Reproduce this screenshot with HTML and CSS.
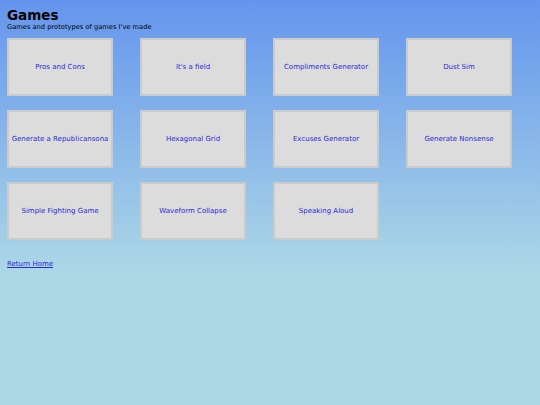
FILE: index.html
```html
<!DOCTYPE html>
<html>
<head>
<meta charset="utf-8">
<title>Games</title>
<link rel="stylesheet" href="styles.css">
</head>
<body>
<div class="page">
  <h1 class="title">Games</h1>
  <p class="subtitle">Games and prototypes of games I've made</p>
  <div class="grid">
    <a class="card" href="#">Pros and Cons</a>
    <a class="card" href="#">It's a field</a>
    <a class="card" href="#">Compliments Generator</a>
    <a class="card" href="#">Dust Sim</a>
    <a class="card" href="#">Generate a Republicansona</a>
    <a class="card" href="#">Hexagonal Grid</a>
    <a class="card" href="#">Excuses Generator</a>
    <a class="card" href="#">Generate Nonsense</a>
    <a class="card" href="#">Simple Fighting Game</a>
    <a class="card" href="#">Waveform Collapse</a>
    <a class="card" href="#">Speaking Aloud</a>
  </div>
  <a class="home" href="#">Return Home</a>
</div>
</body>
</html>
```
FILE: styles.css
```css
html {
  background: #add8e6;
}
body {
  margin: 0;
  background: linear-gradient(#6495ed, #add8e6) no-repeat;
  font-family: "DejaVu Sans", Verdana, sans-serif;
}
.page {
  padding: 7px 7px 8px 7px;
  display: flex;
  flex-direction: column;
  align-items: flex-start;
}
.title {
  margin: 0;
  font-size: 13.5px;
  line-height: 16px;
  font-weight: bold;
  color: #000;
}
.subtitle {
  margin: 0;
  font-size: 6.7px;
  line-height: 8px;
  color: #000;
}
.grid {
  margin-top: 7px;
  width: 532px;
  display: flex;
  flex-wrap: wrap;
  gap: 14px 27px;
}
.card {
  box-sizing: border-box;
  width: 106px;
  height: 58px;
  background: #dcdcdc;
  border: 2px solid #cbcbcb;
  display: flex;
  align-items: center;
  justify-content: center;
  text-align: center;
  font-size: 7px;
  color: #2a2ad8;
  text-decoration: none;
}
.home {
  margin-top: 20px;
  font-size: 7px;
  line-height: 8px;
  color: #2a2ad8;
}
```
